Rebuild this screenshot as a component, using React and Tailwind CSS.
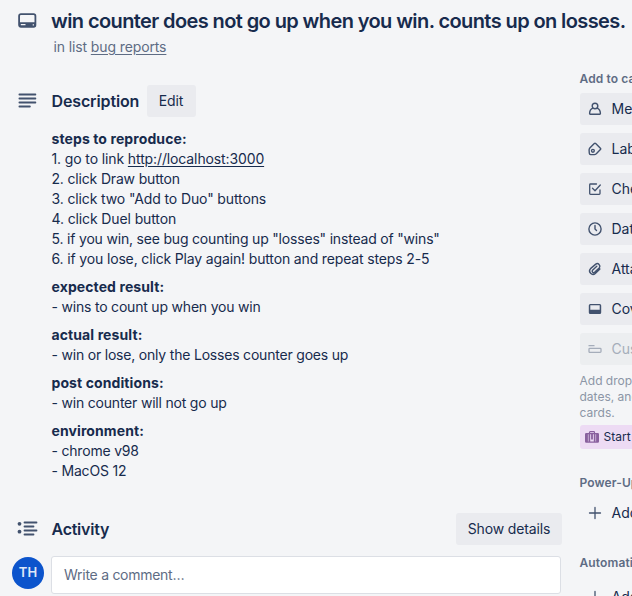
import React from "react";

const steps = [
  { text: "2. click Draw button", className: "tracking-[-0.17px]" },
  { text: "3. click two \"Add to Duo\" buttons", className: "tracking-[-0.12px]" },
  { text: "4. click Duel button", className: "tracking-[-0.12px]" },
  { text: "5. if you win, see bug counting up \"losses\" instead of \"wins\"", className: "tracking-[-0.19px]" },
  { text: "6. if you lose, click Play again! button and repeat steps 2-5", className: "tracking-[-0.15px]" },
];

const sections = [
  { title: "expected result:", lines: ["- wins to count up when you win"] },
  { title: "actual result:", lines: ["- win or lose, only the Losses counter goes up"] },
  { title: "post conditions:", lines: ["- win counter will not go up"] },
  { title: "environment:", lines: ["- chrome v98", "- MacOS 12"] },
];

const stroke = { fill: "none", stroke: "currentColor", strokeLinecap: "round", strokeLinejoin: "round" };

const MemberIcon = () => (
  <svg width="16" height="16" viewBox="0 0 16 16" {...stroke} strokeWidth="1.4">
    <circle cx="8" cy="5" r="2.8" />
    <path d="M5.8 7.2C3.6 8.2 2.6 9.8 2.6 12.6q0 .6.6.6h9.6q.6 0 .6-.6c0-2.800-1-4.400-3.200-5.400" />
  </svg>
);

const LabelIcon = () => (
  <svg width="16" height="16" viewBox="0 0 16 16" {...stroke} strokeWidth="1.4">
    <path d="M8.700 2.500 13.400 7.200q.7.7 0 1.400L9.300 12.800q-.9.800-2 .8L3.600 13.500q-1.200-.1-1.300-1.300L2.100 9q0-1.100.7-2L7.300 2.500q.7-.6 1.400 0Z" />
    <circle cx="5.900" cy="9.800" r="1.400" />
  </svg>
);

const CheckIcon = () => (
  <svg width="16" height="16" viewBox="0 0 16 16" {...stroke} strokeWidth="1.300">
    <path d="M9.500 3H3.500q-.8 0-.8.8v8.700q0 .8.800.8h8.700q.8 0 .8-.8V9" />
    <path d="m5.500 7.300 2.500 2.500 5.300-5.800" />
  </svg>
);

const ClockIcon = () => (
  <svg width="16" height="16" viewBox="0 0 16 16" {...stroke} strokeWidth="1.400">
    <circle cx="8" cy="8" r="6.100" />
    <path d="M8 4.400V8l1.500 1.500" />
  </svg>
);

const ClipIcon = () => (
  <svg width="16" height="16" viewBox="0 0 16 16" {...stroke} strokeWidth="1.400">
    <path d="m12.900 7.900-4.600 4.500a3.400 3.400 0 0 1-4.800-4.800l5.300-4.500a2.600 2.600 0 0 1 3.600 3.600L7.600 11.300a1.500 1.500 0 0 1-2.100-2.100l4.300-4" />
  </svg>
);

const CoverIcon = () => (
  <svg width="16" height="16" viewBox="0 0 16 16" fill="currentColor">
    <path fillRule="evenodd" d="M3.300 3h9.400q1.500 0 1.500 1.500v7q0 1.500-1.500 1.500H3.300q-1.500 0-1.500-1.500v-7Q1.800 3 3.300 3Zm0 1.300v4.400h9.400V4.300H3.300Z" />
  </svg>
);

const FieldsIcon = () => (
  <svg width="16" height="16" viewBox="0 0 16 16" {...stroke} strokeWidth="1.300">
    <path d="M2 4.700h5" />
    <rect x="2" y="7.400" width="12" height="4" rx="0.800" />
  </svg>
);

const PlusIcon = () => (
  <svg width="16" height="16" viewBox="0 0 16 16" {...stroke} strokeWidth="1.300">
    <path d="M8 2.500v11M2.500 8h11" />
  </svg>
);

const actions = [
  { label: "Members", Icon: MemberIcon },
  { label: "Labels", Icon: LabelIcon },
  { label: "Checklist", Icon: CheckIcon },
  { label: "Dates", Icon: ClockIcon },
  { label: "Attachment", Icon: ClipIcon },
  { label: "Cover", Icon: CoverIcon },
  { label: "Custom Fields", Icon: FieldsIcon, disabled: true },
];

const SideHeading = ({ children }) => (
  <h4 className="-ml-[0.500px] h-5 text-[12px] leading-5 font-semibold tracking-[0.12px] text-[#5e6c84]">{children}</h4>
);

const Plain = ({ children }) => (
  <div className="flex h-8 items-center pl-[7px]">
    <span className="text-[#42526e]"><PlusIcon /></span>
    <span className="ml-[8.500px] text-[14px] leading-5">{children}</span>
  </div>
);

export default function App() {
  return (
    <div className="flex h-[596px] w-[632px] flex-col overflow-hidden bg-[#f4f5f7] font-['Inter','Liberation_Sans',sans-serif] text-[#172b4d]">
      <header className="flex h-[57px] shrink-0 pt-[9px] pl-[18px]">
        <svg className="mt-1 shrink-0 text-[#42526e]" width="19" height="16" viewBox="0 0 19 16">
          <rect x="1.100" y="1.100" width="16.300" height="12.800" rx="1.800" fill="none" stroke="currentColor" strokeWidth="1.800" />
          <path fill="currentColor" fillRule="evenodd" d="M1 9.200h16.500v3.300q0 1.500-1.500 1.500H2.500Q1 14 1 12.500Zm13.700 2v1.300H16v-1.300ZM2.800 11v1.300h4.700V11Z" />
        </svg>
        <div className="ml-[14px] whitespace-nowrap">
          <h1 className="text-[20px] leading-6 font-semibold tracking-[-0.6px]">win counter does not go up when you win. counts up on losses.</h1>
          <p className="mt-1 ml-[2.500px] text-[14px] leading-5 tracking-[-0.12px] text-[#5e6c84]">
            in list <span className="underline underline-offset-2">bug reports</span>
          </p>
        </div>
      </header>

      <div className="flex min-h-0 flex-1">
        <main className="w-[562px] shrink-0 pt-7">
          <div className="flex h-8 items-center pl-[18px]">
            <svg className="text-[#42526e]" width="19" height="16" viewBox="0 0 19 16" {...stroke} strokeWidth="1.800">
              <path d="M1.400 1.500h16M1.400 5.500h16M1.400 9.500h16M1.400 13.500h10.500" />
            </svg>
            <h2 className="ml-[14.500px] w-[95.500px] text-[16px] leading-5 font-semibold tracking-[-0.13px]">Description</h2>
            <button className="h-8 w-[49px] rounded-[3px] bg-[#eaebef] pr-px pb-px text-[14px] tracking-[-0.1px]">Edit</button>
          </div>

          <div className="mt-3 flex h-[352px] flex-col gap-2 pl-[51.500px] text-[14px] leading-5 tracking-[-0.2px] whitespace-nowrap">
            <div>
              <p className="font-bold tracking-[0.1px]">steps to reproduce:</p>
              <p className="tracking-[-0.12px]">1. go to link <span className="underline underline-offset-2">http://localhost:3000</span></p>
              {steps.map((s) => <p key={s.text} className={s.className}>{s.text}</p>)}
            </div>
            {sections.map((s) => (
              <div key={s.title}>
                <p className="font-bold tracking-[0.1px]">{s.title}</p>
                {s.lines.map((l) => <p key={l}>{l}</p>)}
              </div>
            ))}
          </div>

          <div className="mt-8 flex h-8 items-center pl-[17px]">
            <svg className="text-[#42526e]" width="21" height="16" viewBox="0 0 21 16" {...stroke} strokeWidth="1.800">
              <path d="M7.500 1.500h12M7.500 5.500h9M7.500 9.500h12M7.500 13.500h9" />
              <circle cx="2.500" cy="2.800" r="1.900" fill="currentColor" stroke="none" />
              <circle cx="2.500" cy="10.700" r="1.900" fill="currentColor" stroke="none" />
            </svg>
            <h2 className="ml-[13.500px] text-[16px] leading-5 font-semibold tracking-[-0.25px]">Activity</h2>
            <button className="ml-auto h-8 w-[106px] rounded-[3px] bg-[#eaebef] pb-px text-[14px] tracking-[-0.14px]">Show details</button>
          </div>
          <div className="mt-[11px] flex pl-3">
            <div className="mt-px flex size-8 items-center justify-center rounded-full bg-[#0c54cc] text-[13px] font-semibold text-[#dfe8f8]">TH</div>
            <div className="ml-[7px] flex h-[38px] w-[510px] items-center rounded-[3px] border border-[#dcdfe5] bg-white pb-[2px] pl-3 text-[14px] tracking-[-0.27px] text-[#5e6c84]">Write a comment…</div>
          </div>
        </main>

        <aside className="ml-[18px] w-[168px] shrink-0 pt-[11px] whitespace-nowrap">
          <div className="h-5 pt-px"><SideHeading>Add to card</SideHeading></div>
          <div className="mt-[5px] flex flex-col gap-2">
            {actions.map(({ label, Icon, disabled }) => (
              <div key={label} className={disabled ? "flex h-8 items-center rounded-[3px] bg-[#eceef0] pl-[7px] text-[#a5adba]" : "flex h-8 items-center rounded-[3px] bg-[#eaebef] pl-[7px]"}>
                <span className={disabled ? "text-[#a5adba]" : "text-[#42526e]"}><Icon /></span>
                <span className="ml-[8.500px] text-[14px] leading-5">{label}</span>
              </div>
            ))}
          </div>
          <p className="mt-2 -ml-[0.500px] text-[12px] leading-4 text-[#8c96a6]">
            Add dropdowns, text fields,<br />dates, and more to your<br />cards.
          </p>
          <div className="mt-1 flex h-6 items-center rounded-[3px] bg-[#eddbf4] pl-[5px] text-[12px]">
            <svg className="text-[#89609e]" width="14" height="12" viewBox="0 0 14 12">
              <path d="M4.500 2.500v-1q0-.800.800-.8h3.400q.8 0 .800.800v1" fill="none" stroke="currentColor" strokeWidth="1.200" />
              <path fill="currentColor" fillRule="evenodd" d="M1.200 2h11.600q1.200 0 1.200 1.200v7.300q0 1.200-1.200 1.200H1.200Q0 11.700 0 10.500V3.200Q0 2 1.200 2Zm1.700 1.200v7.300h.6V3.200Zm2.300 0v7.300h3.600V3.200Zm5.300 0v7.300h.6V3.200Z" />
              <path d="M7 3v5.500" stroke="currentColor" strokeWidth="1.800" />
            </svg>
            <span className="ml-[4.500px]">Start free trial</span>
          </div>
          <div className="mt-6"><SideHeading>Power-Ups</SideHeading></div>
          <div className="mt-1"><Plain>Add Power-Ups</Plain></div>
          <div className="mt-6"><SideHeading>Automation</SideHeading></div>
          <div className="mt-2"><Plain>Add button</Plain></div>
        </aside>
      </div>
    </div>
  );
}
